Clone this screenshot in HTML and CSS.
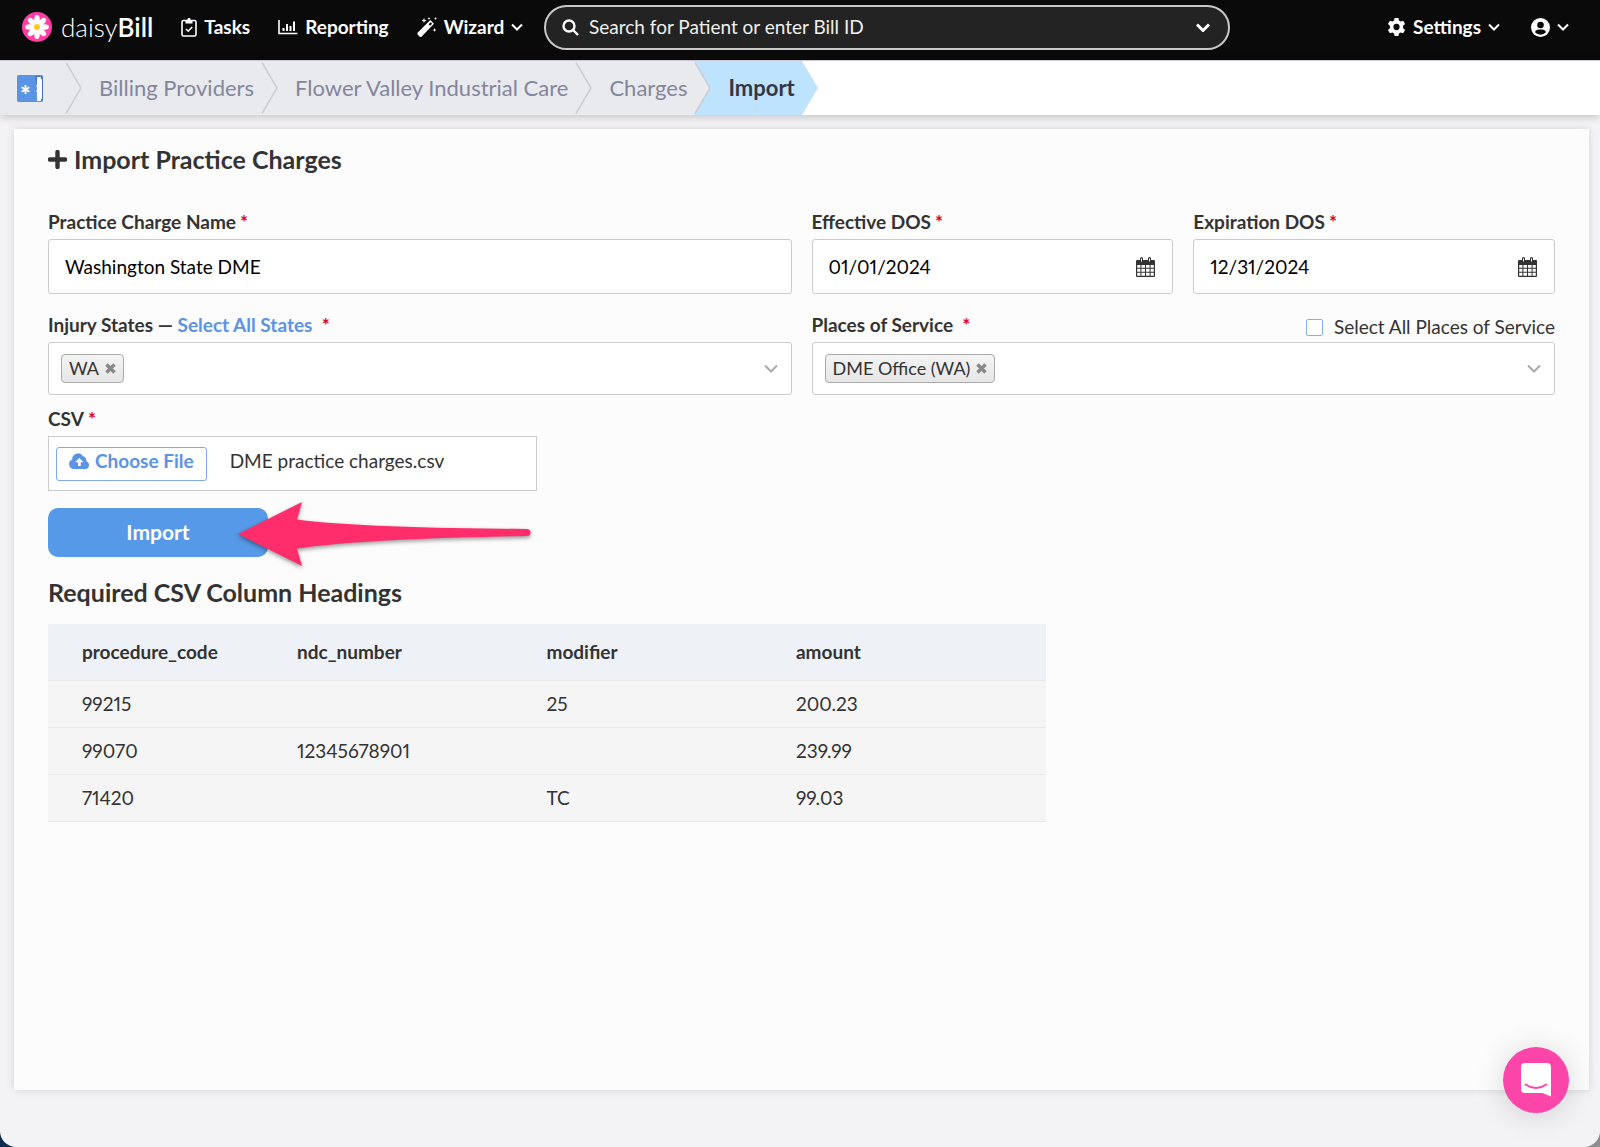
FILE: index.html
```html
<!DOCTYPE html>
<html lang="en">
<head>
    <meta charset="UTF-8">
    <meta name="viewport" content="width=device-width, initial-scale=1.0">
    <title>Import Practice Charges</title>
    <link rel="stylesheet" href="styles.css">
</head>
<body>

<header class="topbar">
    <nav class="menu">
        <a class="brand" href="#">
            <svg width="30" height="30" viewBox="0 0 30 30">
                <circle cx="15" cy="15" r="15" fill="#ff3fa4"/>
                <g fill="#fff">
                    <ellipse cx="15" cy="8" rx="2.8" ry="5"/>
                    <ellipse cx="15" cy="8" rx="2.8" ry="5" transform="rotate(45 15 15)"/>
                    <ellipse cx="15" cy="8" rx="2.8" ry="5" transform="rotate(90 15 15)"/>
                    <ellipse cx="15" cy="8" rx="2.8" ry="5" transform="rotate(135 15 15)"/>
                    <ellipse cx="15" cy="8" rx="2.8" ry="5" transform="rotate(180 15 15)"/>
                    <ellipse cx="15" cy="8" rx="2.8" ry="5" transform="rotate(225 15 15)"/>
                    <ellipse cx="15" cy="8" rx="2.8" ry="5" transform="rotate(270 15 15)"/>
                    <ellipse cx="15" cy="8" rx="2.8" ry="5" transform="rotate(315 15 15)"/>
                </g>
                <circle cx="15" cy="15" r="3" fill="#ffc91f"/>
            </svg>
            <span class="brand-name">daisy<b>Bill</b></span>
        </a>
        <a class="menu-link" href="#">
            <svg width="16" height="20" viewBox="0 0 16 20" fill="none" stroke="#fff" stroke-width="1.6">
                <rect x="1" y="3.5" width="14" height="15.5" rx="1.5"/>
                <path d="M4.5 3.5h1.6a2 2 0 0 1 3.8 0h1.6v3h-7z" fill="#fff" stroke="none"/>
                <path d="M8 1v2" stroke-width="2.4"/>
                <path d="M5 12l2.2 2.2L11.2 10"/>
            </svg>
            Tasks
        </a>
        <a class="menu-link" href="#">
            <svg width="20" height="16" viewBox="0 0 20 16" fill="none" stroke="#fff" stroke-width="2">
                <path d="M1 1v13.5h18.5" stroke-width="1.6"/>
                <path d="M5.500 12V9M9 12V5M12.500 12V7M16 12V2.500"/>
            </svg>
            Reporting
        </a>
        <button class="menu-link" type="button">
            <svg width="20" height="20" viewBox="0 0 20 20" fill="#fff">
                <path d="M.8 15.500L13.300 3l3.700 3.700L4.700 19.400a1.600 1.600 0 0 1-2.200 0l-1.700-1.700a1.600 1.600 0 0 1 0-2.200z"/>
                <path d="M11.600 7.200l1.500 1.500 2-2-1.500-1.500z" fill="#0a0a0a"/>
                <path d="M7 1l.7 1.800 1.800.7-1.800.7L7 6l-.7-1.800-1.800-.7 1.800-.7zM17.500 11l.6 1.400 1.400.6-1.400.6-.6 1.400-.6-1.400-1.400-.6 1.400-.6zM12 0l.4 1.100 1.100.4-1.100.4L12 3l-.4-1.100-1.100-.4 1.100-.4zM18.500 0l.4 1.100 1.100.4-1.100.4-.4 1.100-.4-1.100-1.100-.4 1.100-.4z"/>
            </svg>
            Wizard
            <svg class="caret" width="12" height="8" viewBox="0 0 12 8"><path d="M1 1.500l5 5 5-5"/></svg>
        </button>
    </nav>

    <form class="search">
        <svg width="17" height="17" viewBox="0 0 17 17" fill="none" stroke="#fff" stroke-width="2.400">
            <circle cx="7" cy="7" r="5.500"/>
            <path d="M11 11l5 5"/>
        </svg>
        <input type="text" aria-label="Search" placeholder="Search for Patient or enter Bill ID">
        <button class="search-toggle" type="button" aria-label="Search options">
            <svg class="caret caret-bold" width="14" height="9" viewBox="0 0 14 9"><path d="M1 1.500l6 6 6-6"/></svg>
        </button>
    </form>

    <nav class="account">
        <button class="menu-link" type="button">
            <svg width="19" height="20" viewBox="0 0 20 20">
                <path fill="#fff" fill-rule="evenodd" d="M8 0.500h4l.6 2.700 1.700 1 2.700-.9 2 3.500-2.100 1.900v2.600l2.100 1.900-2 3.500-2.700-.9-1.700 1-.6 2.700H8l-.6-2.700-1.700-1-2.700.9-2-3.500 2.100-1.900V8.700L1 6.800l2-3.500 2.700.9 1.700-1zM10 6.700a3.300 3.300 0 1 0 0 6.600 3.300 3.300 0 0 0 0-6.600z"/>
            </svg>
            Settings
            <svg class="caret" width="12" height="8" viewBox="0 0 12 8"><path d="M1 1.500l5 5 5-5"/></svg>
        </button>
        <button class="menu-link" type="button" aria-label="Account">
            <svg width="19" height="19" viewBox="0 0 19 19">
                <circle cx="9.500" cy="9.500" r="9.500" fill="#fff"/>
                <circle cx="9.500" cy="7" r="3.300" fill="#0a0a0a"/>
                <path d="M4 14.300c.6-2 2-2.900 3.600-2.900h3.800c1.600 0 3 .9 3.600 2.900a7.400 7.400 0 0 1-11 0z" fill="#0a0a0a"/>
            </svg>
            <svg class="caret" width="12" height="8" viewBox="0 0 12 8"><path d="M1 1.500l5 5 5-5"/></svg>
        </button>
    </nav>
</header>

<ol class="breadcrumbs">
    <li class="crumb-home">
        <a href="#" aria-label="Home">
            <svg width="27" height="27" viewBox="0 0 27 27">
                <rect width="26" height="27" rx="1.500" fill="#5b93e5"/>
                <path d="M18 1h6l2 2v22l-3 1z" fill="#3f74c0"/>
                <path d="M20 2h4v2h1v20h-1v2h-4v-9l-1-1 1-1v-3l-1-1 1-1z" fill="#fff"/>
                <path d="M8.500 10v9M4.600 12.300l7.800 4.400M4.600 16.700l7.800-4.400" stroke="#fff" stroke-width="1.800"/>
            </svg>
        </a>
    </li>
    <li class="crumb">
        <svg class="crumb-line" width="17" height="54" viewBox="0 0 17 54"><path d="M1 1.500l15 25.500-15 25.500"/></svg>
        <a href="#">Billing Providers</a>
    </li>
    <li class="crumb">
        <svg class="crumb-line" width="17" height="54" viewBox="0 0 17 54"><path d="M1 1.500l15 25.500-15 25.500"/></svg>
        <a href="#">Flower Valley Industrial Care</a>
    </li>
    <li class="crumb">
        <svg class="crumb-line" width="17" height="54" viewBox="0 0 17 54"><path d="M1 1.500l15 25.500-15 25.500"/></svg>
        <a href="#">Charges</a>
    </li>
    <li class="crumb crumb-active">
        <svg class="crumb-line" width="17" height="54" viewBox="0 0 17 54"><path class="crumb-fill" d="M0 0l16 27-16 27z"/><path d="M1 1.500l15 25.500-15 25.500"/></svg>
        <span>Import</span>
    </li>
    <li class="crumb-tip">
        <svg width="16" height="54" viewBox="0 0 16 54"><path d="M0 0l16 27-16 27z" fill="#bde3ff"/></svg>
    </li>
</ol>

<main class="panel">
    <h1 class="title">
        <svg width="19" height="19" viewBox="0 0 19 19"><path d="M9.500 2v15M2 9.500h15" stroke="#333" stroke-width="4.400" stroke-linecap="round"/></svg>
        Import Practice Charges
    </h1>

    <form class="form-grid">
        <div class="field half">
            <label for="chargeName">Practice Charge Name <span class="req">*</span></label>
            <div class="box">
                <input type="text" id="chargeName" value="Washington State DME">
            </div>
        </div>
        <div class="field quarter">
            <label for="effectiveDos">Effective DOS <span class="req">*</span></label>
            <div class="box">
                <input type="text" id="effectiveDos" value="01/01/2024">
                <svg width="19" height="20" viewBox="0 0 19 20"><path fill="#333" fill-rule="evenodd" d="M1 3h3V1.500a1.500 1.500 0 0 1 3 0V3h5V1.500a1.500 1.500 0 0 1 3 0V3h3a1 1 0 0 1 1 1v15a1 1 0 0 1-1 1H1a1 1 0 0 1-1-1V4a1 1 0 0 1 1-1zM1.200 8v2.800h3.200V8zM5.400 8v2.800h3.600V8zM10 8v2.800h3.600V8zM14.600 8v2.800h3.200V8zM1.200 11.800v3h3.200v-3zM5.400 11.800v3h3.600v-3zM10 11.800v3h3.600v-3zM14.600 11.800v3h3.200v-3zM1.200 15.800v3h3.200v-3zM5.400 15.800v3h3.600v-3zM10 15.800v3h3.600v-3zM14.600 15.800v3h3.200v-3z"/><path d="M5.500 1.500v3M13.500 1.500v3" stroke="#fff"/></svg>
            </div>
        </div>
        <div class="field quarter">
            <label for="expirationDos">Expiration DOS <span class="req">*</span></label>
            <div class="box">
                <input type="text" id="expirationDos" value="12/31/2024">
                <svg width="19" height="20" viewBox="0 0 19 20"><path fill="#333" fill-rule="evenodd" d="M1 3h3V1.500a1.500 1.500 0 0 1 3 0V3h5V1.500a1.500 1.500 0 0 1 3 0V3h3a1 1 0 0 1 1 1v15a1 1 0 0 1-1 1H1a1 1 0 0 1-1-1V4a1 1 0 0 1 1-1zM1.200 8v2.800h3.200V8zM5.400 8v2.800h3.600V8zM10 8v2.800h3.600V8zM14.600 8v2.800h3.200V8zM1.200 11.800v3h3.200v-3zM5.400 11.800v3h3.600v-3zM10 11.800v3h3.600v-3zM14.600 11.800v3h3.200v-3zM1.200 15.800v3h3.200v-3zM5.400 15.800v3h3.600v-3zM10 15.800v3h3.600v-3zM14.600 15.800v3h3.200v-3z"/><path d="M5.500 1.500v3M13.500 1.500v3" stroke="#fff"/></svg>
            </div>
        </div>

        <div class="field half">
            <div class="label-row">
                <div>
                    <label for="injuryStates">Injury States</label> —
                    <a class="select-all" href="#">Select All States</a>&nbsp; <span class="req">*</span>
                </div>
            </div>
            <div class="box box-select">
                <span class="chip">WA <button type="button" aria-label="Remove WA"><svg width="11" height="11" viewBox="0 0 11 11"><path d="M1.500 1.500l8 8M9.500 1.500l-8 8"/></svg></button></span>
                <select id="injuryStates"><option value="" selected></option><option>WA</option></select>
                <svg class="select-arrow" width="14" height="9" viewBox="0 0 14 9"><path d="M1 1.500l6 6 6-6"/></svg>
            </div>
        </div>
        <div class="field half">
            <div class="label-row">
                <div>
                    <label for="places">Places of Service</label>&nbsp; <span class="req">*</span>
                </div>
                <label class="check"><input type="checkbox"> Select All Places of Service</label>
            </div>
            <div class="box box-select">
                <span class="chip">DME Office (WA) <button type="button" aria-label="Remove DME Office (WA)"><svg width="11" height="11" viewBox="0 0 11 11"><path d="M1.500 1.500l8 8M9.500 1.500l-8 8"/></svg></button></span>
                <select id="places"><option value="" selected></option><option>DME Office (WA)</option></select>
                <svg class="select-arrow" width="14" height="9" viewBox="0 0 14 9"><path d="M1 1.500l6 6 6-6"/></svg>
            </div>
        </div>

        <div class="field third">
            <label for="csvFile">CSV <span class="req">*</span></label>
            <div class="box box-file">
                <input class="file-input" type="file" id="csvFile" accept=".csv">
                <label class="choose" for="csvFile">
                    <svg width="21" height="16" viewBox="0 0 21 16">
                        <path d="M5 16a5 5 0 0 1-1.800-9.600A5.800 5.800 0 0 1 14 3.300a4 4 0 0 1 3.200 5A4 4 0 0 1 17 16z" fill="#5b93e5"/>
                        <path d="M10.300 5l4.200 4.300h-2.800V13H9V9.300H6.100z" fill="#fff"/>
                    </svg>
                    Choose File
                </label>
                <span class="file-name">DME practice charges.csv</span>
            </div>
        </div>

        <div class="actions">
            <button class="import-btn" type="button">Import</button>
            <svg class="arrow" width="300" height="76" viewBox="0 0 300 76">
                <path d="M4 38L68 6l-5 17.500c50 6.500 136 9 230 9.500a3.500 3.500 0 0 1 0 7c-94 1.500-180 5-230 12.500L68 70z" fill="#ff2d6c"/>
            </svg>
        </div>
    </form>

    <h2 class="subtitle">Required CSV Column Headings</h2>
    <table class="headings">
        <thead>
            <tr><th>procedure_code</th><th>ndc_number</th><th>modifier</th><th>amount</th></tr>
        </thead>
        <tbody>
            <tr><td>99215</td><td></td><td>25</td><td>200.23</td></tr>
            <tr><td>99070</td><td>12345678901</td><td></td><td>239.99</td></tr>
            <tr><td>71420</td><td></td><td>TC</td><td>99.03</td></tr>
        </tbody>
    </table>
</main>

<button class="chat" type="button" aria-label="Open chat">
    <svg width="30" height="34" viewBox="0 0 30 34">
        <path d="M4 0h22a4 4 0 0 1 4 4v29.500L21.500 30H4a4 4 0 0 1-4-4V4a4 4 0 0 1 4-4z" fill="#fff"/>
        <path d="M4.500 21.500q10.500 7 21 0" fill="none" stroke="#fb45a8" stroke-width="2" stroke-linecap="round"/>
    </svg>
</button>

</body>
</html>
```
FILE: styles.css
```css
* {
    box-sizing: border-box;
}
html {
    background: linear-gradient(to right, #0b2c4d 50%, #8d8d92 50%);
}
body {
    margin: 0;
    min-height: 100vh;
    display: flex;
    flex-direction: column;
    font-family: Lato, "Open Sans", sans-serif;
    font-size: 19px;
    line-height: 24px;
    font-variant-numeric: proportional-nums;
    color: #333;
    background: #f3f3f6;
    border-radius: 0 0 16px 16px;
}
input, select, button {
    font: inherit;
    font-variant-numeric: inherit;
    color: inherit;
    border: none;
    background: none;
    padding: 0;
    min-width: 0;
}
button {
    cursor: pointer;
}
a {
    color: inherit;
    text-decoration: none;
}
svg {
    flex: none;
    display: block;
}

.topbar {
    display: grid;
    grid-template-columns: 34% 42.9% 1fr;
    align-items: center;
    height: 60px;
    padding-bottom: 6px;
    background: #0a0a0a;
    color: #fff;
}
.menu, .account, .menu-link, .brand {
    display: flex;
    align-items: center;
}
.menu {
    gap: 28px;
    padding-left: 22px;
}
.account {
    justify-content: flex-end;
    gap: 31px;
    padding-right: 31px;
}
.brand {
    gap: 9px;
}
.brand-name {
    font-size: 26px;
    font-weight: 300;
}
.brand-name b {
    font-weight: 600;
}
.menu-link {
    gap: 7px;
    font-weight: 700;
    white-space: nowrap;
}
.caret {
    fill: none;
    stroke: #fff;
    stroke-width: 2;
}
.caret-bold {
    stroke-width: 3;
}
.search {
    display: flex;
    align-items: center;
    gap: 10px;
    height: 45px;
    padding: 0 18px 0 16px;
    border: 2px solid #c8c8c8;
    border-radius: 23px;
    background: #232323;
}
.search input {
    flex: 1;
    outline: none;
}
.search input::placeholder {
    color: #f0f0f0;
    opacity: 1;
}

.breadcrumbs {
    display: flex;
    height: 55px;
    margin: 0;
    padding: 0;
    list-style: none;
    font-size: 22px;
    color: #83869c;
    background: #fff;
    border-top: 1px solid #c9cad6;
    box-shadow: 0 2px 8px rgba(0,0,0,0.2);
}
.crumb, .crumb-home {
    display: flex;
    align-items: center;
    background: #e9eaee;
    white-space: nowrap;
}
.crumb-home {
    width: 65px;
    padding-left: 17px;
}
.crumb {
    gap: 17px;
    padding-right: 7px;
}
.crumb-line {
    fill: none;
    stroke: #cdced6;
    stroke-width: 1.5;
}
.crumb-line .crumb-fill {
    fill: #e9eaee;
    stroke: none;
}
.crumb-active {
    background: #bde3ff;
    color: #333645;
    font-weight: 700;
}

.panel {
    flex: 1;
    margin: 14px 11px 57px 14px;
    padding: 15px 34px;
    background: #fcfcfc;
    box-shadow: 0 0 8px rgba(0,0,0,0.12);
}
.title, .subtitle {
    margin: 0;
    font-size: 25px;
    line-height: 30px;
    font-weight: 700;
}
.title {
    display: flex;
    align-items: center;
    gap: 7px;
    margin-bottom: 36px;
}
.form-grid {
    display: grid;
    grid-template-columns: repeat(12, 1fr);
    column-gap: 20px;
    row-gap: 12px;
}
.half {
    grid-column: span 6;
}
.quarter {
    grid-column: span 3;
}
.third {
    grid-column: span 4;
}
.field label, .label-row {
    font-weight: 700;
}
.field > label, .label-row {
    display: flex;
    gap: 4px;
    margin-bottom: 5px;
}
.label-row {
    justify-content: space-between;
    padding-top: 7px;
}
.field .check {
    display: flex;
    align-items: center;
    gap: 11px;
    padding-top: 2px;
    margin-bottom: -2px;
    font-weight: 400;
}
.check input {
    appearance: none;
    width: 17px;
    height: 17px;
    margin: 0;
    border: 1px solid #7fb2f5;
    border-radius: 2px;
    background: #fff;
}
.req {
    color: #e0001b;
}
.select-all {
    color: #5b93e5;
}
.box {
    display: flex;
    align-items: center;
    height: 55px;
    padding: 0 17px 0 16px;
    border: 1px solid #ccc;
    border-radius: 3px;
    background: #fff;
    color: #000;
}
.box input, .box select {
    flex: 1;
    outline: none;
}
.box-select {
    height: 53px;
    padding: 0 13px 0 12px;
}
.box select {
    appearance: none;
    height: 100%;
}
.select-arrow {
    fill: none;
    stroke: #aaa;
    stroke-width: 2;
}
.chip {
    display: flex;
    align-items: center;
    gap: 6px;
    height: 29px;
    padding: 0 7px 1px;
    border: 1px solid #aaa;
    border-radius: 4px;
    background: linear-gradient(#f4f4f4, #e6e6e6);
    color: #333;
    font-size: 18px;
}
.chip path {
    stroke: #888;
    stroke-width: 3.5;
}
.box-file {
    gap: 23px;
    padding: 0 7px;
    border-radius: 0;
    color: #333;
}
.box .file-input {
    position: absolute;
    width: 1px;
    height: 1px;
    opacity: 0;
}
.field .choose {
    display: flex;
    align-items: center;
    gap: 5px;
    height: 34px;
    padding: 0 12px 5px;
    border: 1px solid #7fa9ea;
    border-radius: 3px;
    color: #5b93e5;
    font-weight: 700;
    cursor: pointer;
}
.file-name {
    padding-bottom: 5px;
}
.actions {
    position: relative;
    grid-column: 1 / -1;
    margin-top: 5px;
}
.import-btn {
    width: 220px;
    height: 49px;
    padding-bottom: 2px;
    border-radius: 10px;
    background: #5699e8;
    color: #fff;
    font-size: 21px;
    font-weight: 700;
}
.arrow {
    position: absolute;
    left: 186px;
    top: -12px;
    filter: drop-shadow(0 2px 2px rgba(0,0,0,0.4));
}

.subtitle {
    margin: 20px 0 17px;
}
.headings {
    width: calc((100% + 20px) * 2 / 3 - 20px);
    table-layout: fixed;
    border-collapse: collapse;
    background: #f5f5f5;
}
.headings th, .headings td {
    height: 47px;
    padding: 0 0 0 34px;
    text-align: left;
    border-bottom: 1px solid #e9e9e9;
}
.headings th {
    width: 25%;
    height: 56px;
    font-weight: 700;
    background: #eef1f6;
}
.headings th:first-child {
    width: 215px;
}
.headings th:last-child {
    width: auto;
}

.chat {
    position: fixed;
    right: 31px;
    bottom: 34px;
    display: flex;
    align-items: center;
    justify-content: center;
    width: 66px;
    height: 66px;
    border-radius: 50%;
    background: #fb45a8;
    box-shadow: 0 2px 30px rgba(0,0,0,0.15);
}
```
